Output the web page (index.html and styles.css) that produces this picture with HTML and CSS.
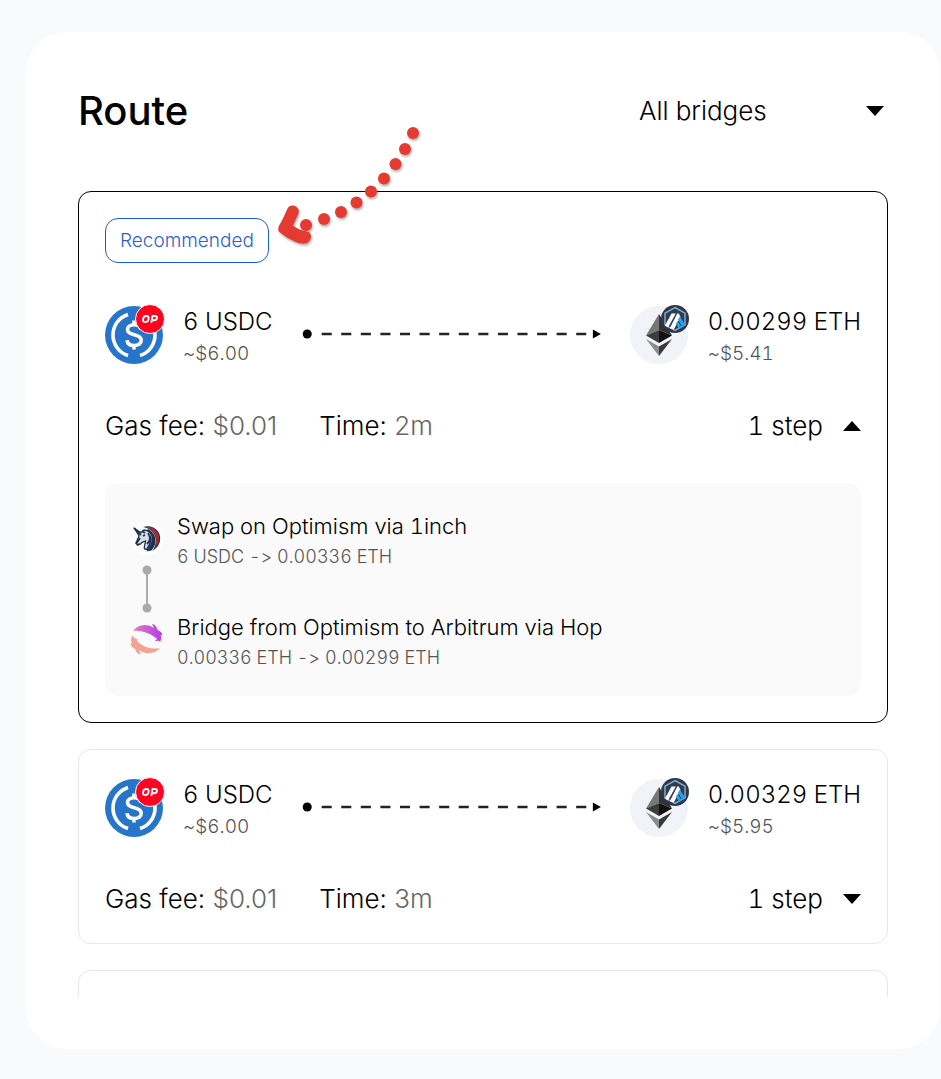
FILE: index.html
```html
<!DOCTYPE html>
<html lang="en">
<head>
<meta charset="utf-8">
<meta name="viewport" content="width=device-width, initial-scale=1">
<title>Route</title>
<link rel="stylesheet" href="styles.css">
</head>
<body>
<svg class="defs" aria-hidden="true">
  <symbol id="usdc" viewBox="0 0 60 60">
    <circle cx="29" cy="31" r="29" fill="#2775ca"/>
    <path d="M23 10.500a21.500 21.500 0 0 0 0 41M35 10.500a21.500 21.500 0 0 1 0 41" fill="none" stroke="#fff" stroke-width="3.600"/>
    <path d="M35.800 25.500c-.6-3.200-3-4.800-6.700-4.800-4.100 0-6.600 2-6.600 4.900 0 3.200 2.500 4.300 6.700 5.200 4.400 1 7 2.200 7 5.500 0 3.200-2.700 5.200-7 5.200-4.200 0-6.800-1.800-7.200-5.300M29 16.500v4.500M29 41v4.500" fill="none" stroke="#fff" stroke-width="3.600"/>
    <circle cx="45" cy="15" r="14.500" fill="#ff0420" stroke="#fff"/>
    <path d="M41.300 12c1.800 0 2.600 1 2.300 2.800-.3 2.200-1.400 3.300-3.300 3.300-1.800 0-2.600-1-2.300-2.800.3-2.200 1.500-3.300 3.300-3.300zM46.300 18.900l1.200-6.900h2.300c1.600 0 2.300.7 2.100 2.100-.2 1.400-1.100 2.100-2.800 2.100h-1.800" fill="none" stroke="#fff" stroke-width="1.900"/>
  </symbol>
  <symbol id="eth" viewBox="0 0 60 60">
    <circle cx="29" cy="31" r="29" fill="#f2f3f8"/>
    <path d="M29 10 16 31.500 29 26z" fill="#777"/>
    <path d="M29 10 42 31.500 29 26z" fill="#333"/>
    <path d="M29 26 16 31.500 29 39z" fill="#3c3c3b"/>
    <path d="M29 26 42 31.500 29 39z" fill="#111"/>
    <path d="M16 35 29 42.500V52z" fill="#8c8c8c"/>
    <path d="M42 35 29 42.500V52z" fill="#393939"/>
    <circle cx="45" cy="15" r="14" fill="#2d374b"/>
    <path d="M45 3.500 55 9.200v11.600l-10 5.700-10-5.700V9.200z" fill="#2d3d54" stroke="#86a9c9" stroke-width="1.500"/>
    <path d="M35 21.500 41.500 9.500h4.300L38 23.500zM39.800 24.300l7.500-14.800h1.500l1.700 3.500-6.700 12.500z" fill="#fff"/>
    <path d="m48 15.500 2-3 5 8.500-2.800 1.800zM46 19.500l1.500-2.500 4.300 6.500-2.800 1.500z" fill="#28a0f0"/>
  </symbol>
  <symbol id="trail" viewBox="0 0 296 10">
    <circle cx="5" cy="5" r="4.500"/>
    <path d="M19.300 5H282" fill="none" stroke="#222" stroke-width="2.400" stroke-dasharray="10 9.400"/>
    <path d="M288 .5 296 5l-8 4.500z"/>
  </symbol>
  <symbol id="down" viewBox="0 0 18 10"><path d="M0 0h18L9 10z"/></symbol>
  <symbol id="up" viewBox="0 0 18 10"><path d="M0 10h18L9 0z"/></symbol>
</svg>

<main class="panel">
  <header class="header">
    <h1 class="title">Route</h1>
    <div class="filter">
      <select class="filter-select" aria-label="Bridges"><option>All bridges</option></select>
      <svg class="caret filter-caret" aria-hidden="true"><use href="#down"/></svg>
    </div>
  </header>

  <div class="routes">
    <article class="card card-active">
      <span class="badge">Recommended</span>
      <div class="swap">
        <div class="token">
          <svg class="token-icon" role="img" aria-label="USDC on Optimism"><use href="#usdc"/></svg>
          <div><div class="amount">6 USDC</div><div class="value">~$6.00</div></div>
        </div>
        <svg class="trail" viewBox="0 0 296 10" aria-hidden="true"><use href="#trail"/></svg>
        <div class="token">
          <svg class="token-icon" role="img" aria-label="ETH on Arbitrum"><use href="#eth"/></svg>
          <div><div class="amount">0.00299 ETH</div><div class="value">~$5.41</div></div>
        </div>
      </div>
      <div class="facts">
        <span>Gas fee: <span class="muted">$0.01</span></span>
        <span>Time: <span class="muted">2m</span></span>
        <button class="toggle" type="button" aria-expanded="true">1 step <svg class="caret" aria-hidden="true"><use href="#up"/></svg></button>
      </div>
      <div class="details">
        <div class="rail" aria-hidden="true">
          <svg class="rail-icon" viewBox="0 0 33 33">
            <circle cx="16.500" cy="16.500" r="16.500" fill="#fff"/>
            <path d="M13 5c6-2 13 0 16 6 2.500 6 1 12-4 16l-3 2c4-5 5-10 3-15-2-5-6-8-12-9z" fill="#1b314f"/>
            <path d="M16 5c6-1 11 3 12.500 8 1.200 5-.5 10-4 12 2-5 2-9 0-13-2-3.500-5-5.500-8.500-7z" fill="#a82a33"/>
            <path d="M18 7c4 2 7 6 7.500 10 .5 4-1 8-4 11.500l-5 1c3-3 4-6 3-9L15 11z" fill="#1b314f"/>
            <path d="M5 7l6 3.500 3-2.500c5 0 8 4 8.500 8 .5 5-2 8-4 12l-4-1c-1-3 1-5 1-8-2 1-4 1-5 3l-3 1-1.500-2L9 14z" fill="#d5dbe4" stroke="#1b314f" stroke-width="1.300"/>
            <path d="M4 6l7 7M10 16l-4 6M13 14l2-1M18 11c3 4 2 8-1 11M20 14c2 4 0 9-3 13M12 9l3 2M7 23l3-1" fill="none" stroke="#1b314f" stroke-width="1.800"/>
          </svg>
          <svg class="rail-link" viewBox="0 0 10 48"><path d="M5 5v38" stroke="#aaa" stroke-width="2"/><circle cx="5" cy="5" r="4.500" fill="#aaa"/><circle cx="5" cy="43" r="4.500" fill="#aaa"/></svg>
          <svg class="rail-icon" viewBox="0 0 33 33">
            <defs><linearGradient id="hop"><stop offset="0" stop-color="#e07fb4"/><stop offset="1" stop-color="#b33bf0"/></linearGradient></defs>
            <path d="M3 8C8 1 17 0 24 5l-2-4c3 .5 4 2 5 4.500l1 2c2 .5 4 2 4.500 5l-2-.5c1 2 1 4-.5 7-1-2-2-1-5-1l2-2C21 11 13 7 3 8z" fill="url(#hop)"/>
            <path d="M30 25c-5 6-14 7-21 2l2 4.500c-3-.5-5-2-6-5.500C2 24.500.5 23 .5 19.500l2 1C0 17 1 15 3 12.500c.5 2 2 3 5 4l-1 1.500C12 23.500 21 27 30 25z" fill="#f3a395"/>
          </svg>
        </div>
        <ol class="steps">
          <li><div class="step-name">Swap on Optimism via 1inch</div><div class="step-value">6 USDC -&gt; 0.00336 ETH</div></li>
          <li><div class="step-name">Bridge from Optimism to Arbitrum via Hop</div><div class="step-value">0.00336 ETH -&gt; 0.00299 ETH</div></li>
        </ol>
      </div>
      <svg class="pointer" viewBox="0 0 150 126" aria-hidden="true">
        <g fill="#e53a30">
          <circle cx="139" cy="9" r="6"/><circle cx="131" cy="25" r="6"/><circle cx="121.500" cy="40" r="6"/><circle cx="110" cy="54.500" r="6"/><circle cx="97" cy="67.500" r="6"/><circle cx="82.500" cy="78.500" r="6"/><circle cx="67" cy="88" r="6"/><circle cx="50" cy="95" r="6"/><circle cx="32" cy="101" r="6"/>
          <path d="M13.500 84.500c2-4 9-4 11 1 .7 2 0 4-1 6l-4.500 10c4 3 9 5.500 14 6 5 .5 5 7 2 10-3 3-8 2.500-13 .5-7-3-12-6-16.500-10-2-2-1.500-5 .5-8 3-5 5-10 7.500-15.500z"/>
        </g>
      </svg>
    </article>

    <article class="card">
      <div class="swap">
        <div class="token">
          <svg class="token-icon" role="img" aria-label="USDC on Optimism"><use href="#usdc"/></svg>
          <div><div class="amount">6 USDC</div><div class="value">~$6.00</div></div>
        </div>
        <svg class="trail" viewBox="0 0 296 10" aria-hidden="true"><use href="#trail"/></svg>
        <div class="token">
          <svg class="token-icon" role="img" aria-label="ETH on Arbitrum"><use href="#eth"/></svg>
          <div><div class="amount">0.00329 ETH</div><div class="value">~$5.95</div></div>
        </div>
      </div>
      <div class="facts">
        <span>Gas fee: <span class="muted">$0.01</span></span>
        <span>Time: <span class="muted">3m</span></span>
        <button class="toggle" type="button" aria-expanded="false">1 step <svg class="caret" aria-hidden="true"><use href="#down"/></svg></button>
      </div>
    </article>

    <article class="card card-peek"></article>
  </div>
</main>
</body>
</html>
```
FILE: styles.css
```css
* { box-sizing: border-box; }

body {
  margin: 0;
  padding: 32px 1px 30px 26px;
  background: #f8fafc;
  color: #000;
  font: 300 26px/36px Inter, "Liberation Sans", sans-serif;
  font-variant-ligatures: no-contextual;
  font-variant-numeric: tabular-nums;
}

.defs { display: none; }

.panel {
  padding: 52px;
  border-radius: 40px;
  background: #fff;
}

.header {
  display: flex;
  align-items: center;
  justify-content: space-between;
  height: 54px;
  margin-bottom: 53px;
}

.title {
  margin: 0;
  font-size: 40px;
  line-height: 54px;
  font-weight: 500;
}

.filter {
  display: grid;
  align-items: center;
  width: 249px;
  padding-right: 4px;
}

.filter-select {
  grid-area: 1 / 1;
  width: 100%;
  padding: 0;
  border: 0;
  appearance: none;
  background: none;
  color: inherit;
  font: inherit;
}

.filter-caret {
  grid-area: 1 / 1;
  justify-self: end;
  pointer-events: none;
}

.caret {
  flex: none;
  width: 18px;
  height: 10px;
}

.routes {
  display: flex;
  flex-direction: column;
  gap: 26px;
}

.card {
  position: relative;
  padding: 26px;
  border: 1px solid #e6e7ef;
  border-radius: 13px;
}

.card-active { border-color: #000; }

.card-peek {
  height: 27px;
  padding: 0;
  border-bottom: 0;
  border-radius: 13px 13px 0 0;
}

.badge {
  display: block;
  width: fit-content;
  height: 45px;
  margin-bottom: 40px;
  padding: 0 14px;
  border: 1px solid #1a5ce0;
  border-radius: 13px;
  color: #2f5fd0;
  font-size: 19px;
  line-height: 43px;
}

.swap {
  display: flex;
  align-items: center;
  gap: 29px;
  padding-top: 1px;
  margin-bottom: 40px;
}

.token {
  display: flex;
  gap: 18px;
  white-space: nowrap;
}

.token-icon {
  width: 60px;
  height: 60px;
}

.amount {
  font-size: 24px;
  line-height: 36px;
}

.value {
  color: #555;
  font-size: 19px;
  line-height: 28px;
}

.trail {
  flex: 1;
  min-width: 0;
  margin-bottom: 3px;
}

.facts {
  display: flex;
  gap: 42px;
  font-variant-numeric: normal;
}

.muted { color: #666; }

.toggle {
  display: flex;
  align-items: center;
  gap: 20px;
  margin-left: auto;
  padding: 0;
  border: 0;
  background: none;
  color: inherit;
  font: inherit;
  font-variant-numeric: tabular-nums;
}

.details {
  display: flex;
  gap: 14px;
  margin-top: 39px;
  padding: 28px 25px 23px;
  border-radius: 13px;
  background: #fafafa;
}

.rail {
  display: flex;
  flex-direction: column;
  align-items: center;
  gap: 10px;
  padding-top: 11px;
}

.rail-icon {
  width: 33px;
  height: 33px;
}

.rail-link {
  width: 10px;
  height: 48px;
}

.steps {
  display: flex;
  flex-direction: column;
  gap: 40px;
  margin: 0;
  padding: 0;
  list-style: none;
}

.step-name {
  font-size: 22px;
  line-height: 31px;
}

.step-value {
  color: #555;
  font-size: 18px;
  line-height: 30px;
}

.pointer {
  position: absolute;
  top: -68px;
  left: 195px;
  width: 150px;
  height: 126px;
  filter: drop-shadow(1px 2px 1px rgb(0 0 0 / 30%));
  pointer-events: none;
}
```
